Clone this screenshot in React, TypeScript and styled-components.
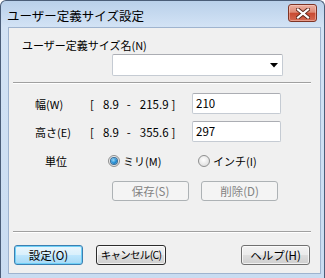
import styled, { createGlobalStyle, css } from 'styled-components'

const GlobalStyle = createGlobalStyle`
  html, body {
    margin: 0;
    padding: 0;
    background: #ffffff;
  }
  body {
    font-family: "Noto Sans CJK JP", "Noto Sans", sans-serif;
    font-size: 11px;
    color: #000000;
  }
`

const Window = styled.div`
  width: 325px;
  height: 278px;
  box-sizing: border-box;
  display: flex;
  flex-direction: column;
  border: 1px solid #4a5d78;
  border-bottom: none;
  border-radius: 6px 6px 0 0;
  background: linear-gradient(#b9d0ea, #d3e3f5 26px, #c9dcf1);
`

const TitleBar = styled.div`
  height: 26px;
  flex: none;
  display: flex;
  align-items: flex-start;
  justify-content: space-between;
  padding: 0 7px 0 6px;
`

const Title = styled.span`
  font-size: 12.5px;
  line-height: 14px;
  margin-top: 8px;
  color: #000000;
`

const CloseButton = styled.div`
  margin-top: 3px;
  width: 29px;
  height: 18px;
  box-sizing: border-box;
  border: 1px solid #7e3425;
  border-radius: 3px;
  background: linear-gradient(#eab0a2 0%, #de8a75 45%, #c94a31 52%, #d46a52 100%);
  box-shadow: inset 0 0 0 1px rgba(255, 220, 210, 0.45);
  display: flex;
  align-items: center;
  justify-content: center;
`

const Client = styled.div`
  flex: 1;
  margin: 0 3px 4px 7px;
  border: 1px solid #9fb4cf;
  background: #f0f0f0;
  display: flex;
  flex-direction: column;
`

const FieldLabel = styled.div`
  padding: 10px 0 0 13px;
  line-height: 14px;
`

const Combo = styled.div`
  margin: 2px 0 0 103px;
  width: 171px;
  height: 22px;
  box-sizing: border-box;
  border: 1px solid #c5cbd3;
  border-top-color: #abadb3;
  border-radius: 2px;
  background: #ffffff;
  display: flex;
  align-items: center;
  justify-content: flex-end;
  padding-right: 4px;
`

const Separator = styled.div<{ $top: number }>`
  margin: ${p => p.$top}px 9px 0 4px;
  height: 0;
  border-top: 1px solid #a0a0a0;
  border-bottom: 1px solid #ffffff;
`

const SizeRow = styled.div<{ $top: number }>`
  margin-top: ${p => p.$top}px;
  padding-left: 26px;
  display: grid;
  grid-template-columns: 55px 102px 89px;
  align-items: center;
  height: 21px;
`

const Range = styled.div`
  display: flex;
  align-items: center;
  font-size: 11.5px;
`

const RangePart = styled.span<{ $gap: number }>`
  margin-left: ${p => p.$gap}px;
`

const TextBox = styled.div`
  height: 21px;
  box-sizing: border-box;
  border: 1px solid #c5cbd3;
  border-top-color: #abadb3;
  border-radius: 2px;
  background: #ffffff;
  padding-left: 3px;
  font-size: 11.5px;
  line-height: 19px;
`

const UnitRow = styled.div`
  margin-top: 11px;
  padding-left: 36px;
  display: flex;
  align-items: center;
  height: 16px;
`

const UnitLabel = styled.span`
  width: 63px;
`

const RadioOption = styled.label<{ $width?: number }>`
  display: flex;
  align-items: center;
  width: ${p => (p.$width ? `${p.$width}px` : 'auto')};
  gap: 3px;
`

const RadioCircle = styled.span<{ $checked?: boolean }>`
  width: 12px;
  height: 12px;
  box-sizing: border-box;
  border-radius: 50%;
  border: 1px solid #8e8f8f;
  background: radial-gradient(circle at 45% 40%, #ffffff, #e2e2e2 70%, #cfcfcf);
  display: flex;
  align-items: center;
  justify-content: center;

  ${p =>
    p.$checked &&
    css`
      &::after {
        content: '';
        width: 6px;
        height: 6px;
        border-radius: 50%;
        background: radial-gradient(circle at 40% 35%, #9ad8f8, #1e8bd3 55%, #0f5e9c);
        box-shadow: 0 0 0 1px #3a6d96;
      }
    `}
`

const ButtonRow = styled.div`
  margin-top: 12px;
  padding-left: 103px;
  display: flex;
  gap: 12px;
`

const Footer = styled.div`
  margin-top: 12px;
  padding: 0 10px 0 5px;
  display: flex;
  gap: 13px;
`

type ButtonKind = 'normal' | 'default' | 'focus' | 'disabled'

const Button = styled.div<{ $kind?: ButtonKind; $width: number; $push?: boolean; $tight?: boolean }>`
  width: ${p => p.$width}px;
  height: 20px;
  box-sizing: border-box;
  border: 1px solid #707070;
  border-radius: 3px;
  background: linear-gradient(#f2f2f2 0%, #ebebeb 48%, #dddddd 52%, #cfcfcf 100%);
  box-shadow: inset 0 0 0 1px rgba(255, 255, 255, 0.7);
  display: flex;
  align-items: center;
  justify-content: center;
  white-space: nowrap;
  font-size: ${p => (p.$tight ? '10.5px' : '11.5px')};
  line-height: 14px;
  letter-spacing: ${p => (p.$tight ? '-0.7px' : '0')};
  color: #000000;
  margin-left: ${p => (p.$push ? 'auto' : '0')};

  ${p =>
    p.$kind === 'default' &&
    css`
      border-color: #3c7fb1;
      background: linear-gradient(#eaf6fd 0%, #d9f0fc 48%, #bee6fd 52%, #a7d9f5 100%);
      box-shadow: inset 0 0 0 1px #6fd0f7;
    `}

  ${p =>
    p.$kind === 'focus' &&
    css`
      border-color: #2c2c2c;
    `}

  ${p =>
    p.$kind === 'disabled' &&
    css`
      border-color: #adb2b5;
      background: #f4f4f4;
      box-shadow: none;
      color: #838383;
    `}
`

export default function App() {
  return (
    <>
      <GlobalStyle />
      <Window>
        <TitleBar>
          <Title>ユーザー定義サイズ設定</Title>
          <CloseButton>
            <svg width="14" height="11" viewBox="0 0 14 11">
              <path
                d="M2 1.5 L7 5.5 L12 1.5 M2 9.5 L7 5.5 L12 9.5"
                stroke="#5a2418"
                strokeWidth="4"
                fill="none"
                strokeLinecap="square"
              />
              <path
                d="M2 1.5 L7 5.5 L12 1.5 M2 9.5 L7 5.5 L12 9.5"
                stroke="#ffffff"
                strokeWidth="2.2"
                fill="none"
                strokeLinecap="square"
              />
            </svg>
          </CloseButton>
        </TitleBar>
        <Client>
          <FieldLabel>ユーザー定義サイズ名(N)</FieldLabel>
          <Combo>
            <svg width="8" height="5" viewBox="0 0 8 5">
              <path d="M0 0 H8 L4 4.5 Z" fill="#000000" />
            </svg>
          </Combo>
          <Separator $top={6} />
          <SizeRow $top={9}>
            <span>幅(W)</span>
            <Range>
              <span>[</span>
              <RangePart $gap={9}>8.9</RangePart>
              <RangePart $gap={8}>-</RangePart>
              <RangePart $gap={9}>215.9</RangePart>
              <RangePart $gap={3}>]</RangePart>
            </Range>
            <TextBox>210</TextBox>
          </SizeRow>
          <SizeRow $top={7}>
            <span>高さ(E)</span>
            <Range>
              <span>[</span>
              <RangePart $gap={9}>8.9</RangePart>
              <RangePart $gap={8}>-</RangePart>
              <RangePart $gap={9}>355.6</RangePart>
              <RangePart $gap={3}>]</RangePart>
            </Range>
            <TextBox>297</TextBox>
          </SizeRow>
          <UnitRow>
            <UnitLabel>単位</UnitLabel>
            <RadioOption $width={90}>
              <RadioCircle $checked />
              ミリ(M)
            </RadioOption>
            <RadioOption>
              <RadioCircle />
              インチ(I)
            </RadioOption>
          </UnitRow>
          <ButtonRow>
            <Button $kind="disabled" $width={77}>保存(S)</Button>
            <Button $kind="disabled" $width={77}>削除(D)</Button>
          </ButtonRow>
          <Separator $top={30} />
          <Footer>
            <Button $kind="default" $width={69}>設定(O)</Button>
            <Button $kind="focus" $width={70} $tight>キャンセル(C)</Button>
            <Button $width={69} $push>ヘルプ(H)</Button>
          </Footer>
        </Client>
      </Window>
    </>
  )
}
